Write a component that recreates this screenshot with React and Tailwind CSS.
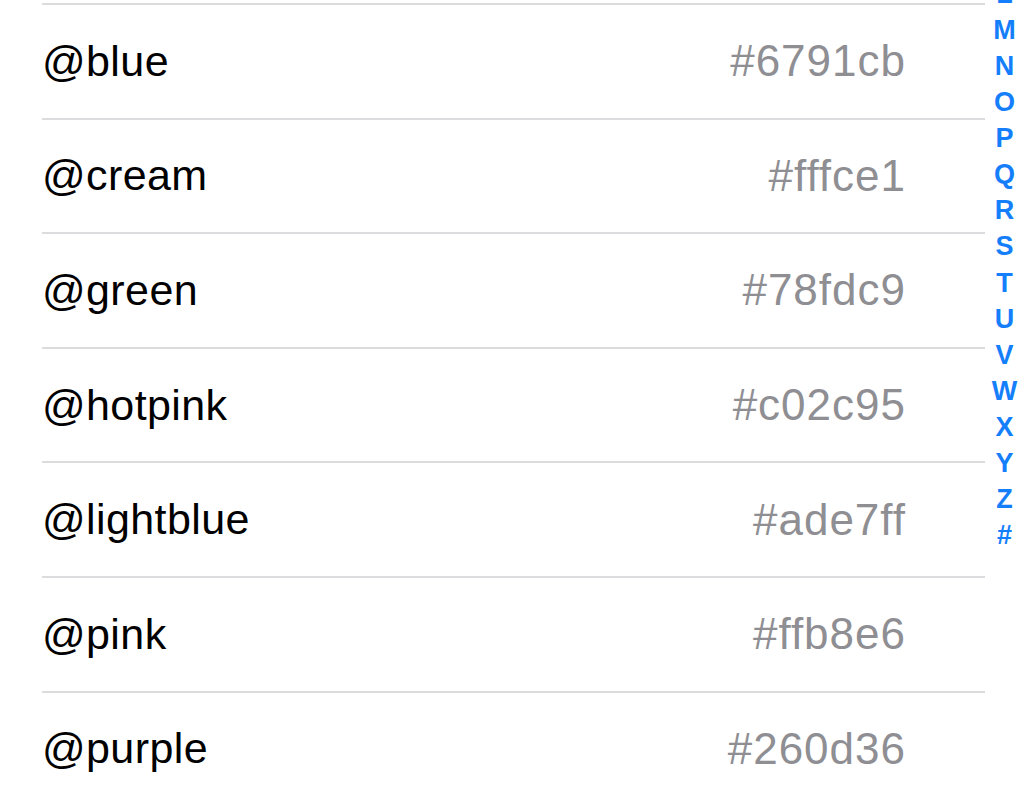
import React from "react";

const rows = [
  ["@blue", "#6791cb"],
  ["@cream", "#fffce1"],
  ["@green", "#78fdc9"],
  ["@hotpink", "#c02c95"],
  ["@lightblue", "#ade7ff"],
  ["@pink", "#ffb8e6"],
  ["@purple", "#260d36"],
];

const index = ["L", "M", "N", "O", "P", "Q", "R", "S", "T", "U", "V", "W", "X", "Y", "Z", "#"];

export default function App() {
  return (
    <div className="relative w-[1024px] h-[803px] overflow-hidden bg-white" style={{ fontFamily: "'Liberation Sans', Arial, sans-serif" }}>
      <div className="flex">
        <div className="flex-1 pl-[42px] pr-[39px] pt-[3px]">
          <div className="h-[2px] bg-[#dcdcdf]" />
          {rows.map(([name, hex], i) => (
            <div key={name}>
              <div className="flex h-[112.6px] items-center justify-between pr-[79px]">
                <span className="text-[43px] leading-none tracking-[0.4px] text-black">{name}</span>
                <span className="text-[44px] leading-none tracking-[1px] text-[#8e8e93]">{hex}</span>
              </div>
              {i < rows.length - 1 && <div className="h-[2px] bg-[#dcdcdf]" />}
            </div>
          ))}
        </div>
      </div>
      <div className="absolute right-0 top-[-24px] flex w-[39px] flex-col items-center">
        {index.map((l) => (
          <div key={l} className="h-[36.07px] leading-[36px] text-[27px] font-bold text-[#147efb]">
            {l}
          </div>
        ))}
      </div>
    </div>
  );
}
